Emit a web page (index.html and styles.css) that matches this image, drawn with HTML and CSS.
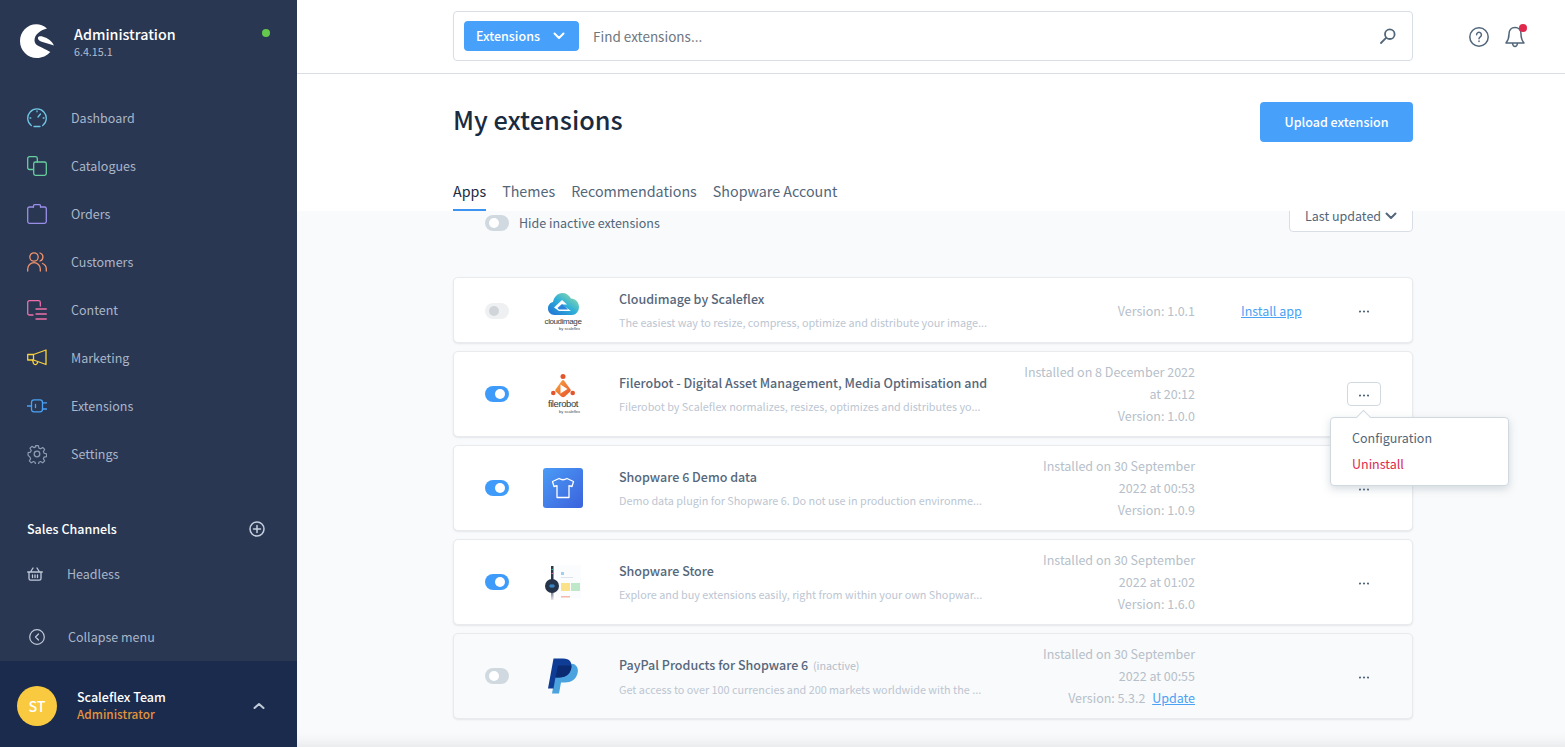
FILE: index.html
```html
<!DOCTYPE html>
<html lang="en">
<head>
  <meta charset="UTF-8">
  <title>My extensions</title>
  <link rel="stylesheet" href="styles.css">
</head>
<body>
  <aside class="sidebar">
    <div class="brand">
      <svg class="logo" viewBox="20 24 34 34"><path d="M47 28.500C43.500 25.500 40 24.300 36.500 24.300 27 24.300 20 32 20 41c0 9.500 7.500 17 17 17 5 0 10-2.300 13.300-6C46 49.500 42 47.500 38.500 46 36 45 34.500 42.500 34.500 40.500 34.500 34 41 30 47 28.500z" fill="#fff"/><path d="M38 37.500c.5-1.200 2.500-1.500 5-.8C48 38 52 41 54 45.500 50 44 45 43 41 41.500 39 40.700 37.500 39 38 37.500z" fill="#fff"/></svg>
      <div class="brand-text">
        <div class="brand-name">Administration</div>
        <div class="brand-version">6.4.15.1</div>
      </div>
      <span class="status-dot"></span>
    </div>

    <nav class="nav">
      <a class="nav-item">
        <svg class="nav-icon" viewBox="0 0 20 20" stroke="#6fc6e4"><path d="M4.300 17.600A9.300 9.300 0 1 1 15.700 17.600"/><path d="M7 18.500h6M10 3v.8M3 10h.8M16.200 10h.8M11 9l2.500-3"/></svg>
        <span>Dashboard</span>
      </a>
      <a class="nav-item">
        <svg class="nav-icon" viewBox="0 0 20 20" stroke="#67cf9e"><path d="M6 13.500H2.500a1.800 1.800 0 0 1-1.800-1.800V2.500A1.800 1.800 0 0 1 2.500.7h6a1.800 1.800 0 0 1 1.800 1.800V6"/><rect x="6.700" y="6" width="12.600" height="13.300" rx="1.800"/></svg>
        <span>Catalogues</span>
      </a>
      <a class="nav-item">
        <svg class="nav-icon" viewBox="0 0 20 20" stroke="#9a8fe8"><path d="M6.500 3H2.500a1.800 1.800 0 0 0-1.800 1.800v12.700a1.800 1.800 0 0 0 1.800 1.800h15a1.800 1.800 0 0 0 1.800-1.800V4.800A1.800 1.800 0 0 0 17.500 3h-4"/><path d="M6.500 3V1.700q0-1 1-1h5q1 0 1 1V3"/></svg>
        <span>Orders</span>
      </a>
      <a class="nav-item">
        <svg class="nav-icon" viewBox="0 0 20 20" stroke="#f0936a"><circle cx="7" cy="5" r="4.200"/><path d="M.7 19v-2a6.200 6.200 0 0 1 12.600 0v2M13 1a4.200 4.200 0 0 1 0 8M15.500 11.500a6 6 0 0 1 3.800 5.500v2"/></svg>
        <span>Customers</span>
      </a>
      <a class="nav-item">
        <svg class="nav-icon" viewBox="0 0 20 20" stroke="#ee6fa8"><path d="M6 15H2.500a1.800 1.800 0 0 1-1.800-1.800V2.500A1.800 1.800 0 0 1 2.500.7h9a1.800 1.800 0 0 1 1.800 1.800V6"/><path d="M9 9h10.300M9 14h10.300M9 19h10.300"/></svg>
        <span>Content</span>
      </a>
      <a class="nav-item">
        <svg class="nav-icon" viewBox="0 0 20 20" stroke="#f9d13e"><path d="M.7 6.500h5.800v5.500H.7zM6.500 6.500L19 2v14.500L6.500 12z"/><path d="M5.500 12l1 3.500q1 1.500 2.500 1 1.500-.5 1.500-2.200"/></svg>
        <span>Marketing</span>
      </a>
      <a class="nav-item">
        <svg class="nav-icon" viewBox="0 0 20 20" stroke="#4aa3f5"><rect x="4.500" y="3.800" width="11" height="12" rx="2.500"/><path d="M0 10h4.500M15.500 6.800H19.500M15.500 13h4M8.500 8.500v3"/></svg>
        <span>Extensions</span>
      </a>
      <a class="nav-item">
        <svg class="nav-icon" viewBox="0 0 20 20" stroke="#8e9bb0"><circle cx="10" cy="10" r="2.800"/><path d="M8.500.8h3l.6 2.700 1.800.8 2.400-1.400 2.100 2.100-1.400 2.400.8 1.800 2.700.6v3l-2.700.6-.8 1.800 1.400 2.400-2.100 2.100-2.400-1.400-1.800.8-.6 2.700h-3l-.6-2.700-1.800-.8-2.400 1.400-2.100-2.100 1.400-2.400-.8-1.800L.2 11.500v-3l2.700-.6.8-1.800L2.300 3.700l2.100-2.100 2.400 1.400 1.800-.8z" transform="translate(.9 .9) scale(.91)"/></svg>
        <span>Settings</span>
      </a>
    </nav>

    <div class="channels-head">
      <span>Sales Channels</span>
      <svg class="plus" viewBox="0 0 16 16"><circle cx="8" cy="8" r="7"/><path d="M8 4.500v7M4.500 8h7"/></svg>
    </div>
    <a class="channel">
      <svg class="channel-icon" viewBox="0 0 16 14"><path d="M.7 5h14.600M2 5v6.500q0 1.700 1.700 1.700h8.600q1.700 0 1.700-1.700V5M3.500 5L6 1M12.500 5L10 1M5.500 8v2.500M8 8v2.500M10.500 8v2.500"/></svg>
      <span>Headless</span>
    </a>
    <a class="collapse">
      <svg class="collapse-icon" viewBox="0 0 16 16"><circle cx="8" cy="8" r="7.300"/><path d="M9.500 5L6.500 8l3 3"/></svg>
      <span>Collapse menu</span>
    </a>

    <div class="user">
      <div class="avatar">ST</div>
      <div class="user-text">
        <div class="user-name">Scaleflex Team</div>
        <div class="user-role">Administrator</div>
      </div>
      <svg class="user-chevron" viewBox="0 0 12 8"><path d="M1.500 6L6 2l4.500 4"/></svg>
    </div>
  </aside>

  <main class="main">
    <header class="topbar">
      <div class="search">
        <button class="search-type">Extensions
          <svg class="chev" viewBox="0 0 12 8"><path d="M1.500 1.500L6 6l4.500-4.500"/></svg>
        </button>
        <span class="search-input">Find extensions...</span>
        <svg class="search-icon" viewBox="0 0 16 16"><circle cx="9.800" cy="6.200" r="4.800"/><path d="M6.300 9.700L1 15"/></svg>
      </div>
      <div class="top-icons">
        <svg class="help" viewBox="0 0 20 20"><circle cx="10" cy="10" r="9.200"/><path d="M7.600 7.800a2.400 2.400 0 1 1 3.700 2c-.9.600-1.300 1-1.300 1.900"/><path d="M10 14v.4"/></svg>
        <span class="bell-wrap">
          <svg class="bell" viewBox="0 0 20 22"><path d="M10 1.500c-3.700 0-6 2.800-6 6.500 0 5-1.300 7-3 9h18c-1.700-2-3-4-3-9 0-3.700-2.300-6.500-6-6.500zM7.500 17.500q.5 3 2.500 3t2.500-3"/></svg>
          <span class="bell-dot"></span>
        </span>
      </div>
    </header>

    <section class="page-head">
      <div class="title-row">
        <h1>My extensions</h1>
        <button class="upload">Upload extension</button>
      </div>
      <div class="tabs">
        <a class="tab active">Apps</a>
        <a class="tab">Themes</a>
        <a class="tab">Recommendations</a>
        <a class="tab">Shopware Account</a>
      </div>
    </section>

    <section class="content">
      <div class="filters">
        <div class="filter-left">
          <span class="toggle off"></span>
          <span>Hide inactive extensions</span>
        </div>
        <div class="sort">Last updated
          <svg class="chev dark" viewBox="0 0 12 8"><path d="M1.500 1.500L6 6l4.500-4.500"/></svg>
        </div>
      </div>

      <div class="list">
        <article class="card short">
          <span class="toggle disabled"></span>
          <div class="app-img">
            <svg class="cloud" viewBox="0 0 31 22">
              <defs><linearGradient id="cl" x1="0" y1="1" x2="1" y2="0"><stop offset="0" stop-color="#1f6fd6"/><stop offset=".5" stop-color="#2fb0d8"/><stop offset="1" stop-color="#a5e3a0"/></linearGradient></defs>
              <path d="M6.500 22C2.500 22 0 19 0 15.500 0 12 2.300 9.500 5 9 6 4 9.500 0 14.500 0c3.700 0 6.500 2 8.500 5.500 4.500 0 8 4 8 8.500s-3.500 8-7 8z" fill="url(#cl)"/>
              <path d="M6 14.500l8-7.500 5 4.500h-5l9 6.500H11z" fill="#fff"/>
              <path d="M9.500 15l4.500-4 3 2.500 3 3H11z" fill="#2a84dc"/>
            </svg>
            <span class="logo-word">cloudimage</span>
            <span class="logo-by">by scaleflex</span>
          </div>
          <div class="info">
            <div class="app-name">Cloudimage by Scaleflex</div>
            <div class="app-desc">The easiest way to resize, compress, optimize and distribute your image...</div>
          </div>
          <div class="version">Version: 1.0.1</div>
          <div class="actions">
            <a class="link install">Install app</a>
            <span class="dots"><svg viewBox="0 0 10 3"><circle cx="1" cy="1.500" r="1.100"/><circle cx="5" cy="1.500" r="1.100"/><circle cx="9" cy="1.500" r="1.100"/></svg></span>
          </div>
        </article>

        <article class="card">
          <span class="toggle on"></span>
          <div class="app-img">
            <svg class="robot" viewBox="0 0 24 24">
              <defs><linearGradient id="fr" x1="0" y1="0" x2="1" y2="1"><stop offset="0" stop-color="#f9a842"/><stop offset="1" stop-color="#e9502a"/></linearGradient></defs>
              <circle cx="12" cy="2.500" r="2.500" fill="#e2552d"/><circle cx="2.300" cy="19" r="2.300" fill="#e2552d"/><circle cx="21.700" cy="19" r="2.300" fill="#e2552d"/>
              <path d="M11 6.500q1-.8 2 0l6.500 9q.7 1-.2 2l-5.500 5q-1.800 1.300-3.600 0l-5.500-5q-.9-1-.2-2z" fill="url(#fr)"/>
              <path d="M9.500 10.500l7 4.500-7 4.500z" fill="#fff"/>
            </svg>
            <span class="logo-word fr">filerobot</span>
            <span class="logo-by">by scaleflex</span>
          </div>
          <div class="info">
            <div class="app-name">Filerobot - Digital Asset Management, Media Optimisation and</div>
            <div class="app-desc">Filerobot by Scaleflex normalizes, resizes, optimizes and distributes yo...</div>
          </div>
          <div class="version">Installed on 8 December 2022 at 20:12<br>Version: 1.0.0</div>
          <div class="actions">
            <span class="dots open"><svg viewBox="0 0 10 3"><circle cx="1" cy="1.500" r="1.100"/><circle cx="5" cy="1.500" r="1.100"/><circle cx="9" cy="1.500" r="1.100"/></svg></span>
          </div>
          <div class="menu">
            <a class="menu-item">Configuration</a>
            <a class="menu-item danger">Uninstall</a>
          </div>
        </article>

        <article class="card">
          <span class="toggle on"></span>
          <div class="app-img demo">
            <svg class="shirt" viewBox="0 0 24 24"><path d="M8 2.500L1.500 5.500l1.500 5 3-.8v11.800h12V9.700l3 .8 1.500-5L16 2.500q-4 2.500-8 0z"/></svg>
          </div>
          <div class="info">
            <div class="app-name">Shopware 6 Demo data</div>
            <div class="app-desc">Demo data plugin for Shopware 6. Do not use in production environme...</div>
          </div>
          <div class="version">Installed on 30 September 2022 at 00:53<br>Version: 1.0.9</div>
          <div class="actions"><span class="dots"><svg viewBox="0 0 10 3"><circle cx="1" cy="1.500" r="1.100"/><circle cx="5" cy="1.500" r="1.100"/><circle cx="9" cy="1.500" r="1.100"/></svg></span></div>
        </article>

        <article class="card">
          <span class="toggle on"></span>
          <div class="app-img store">
            <svg viewBox="0 0 40 40" class="store-art">
              <defs><linearGradient id="st" x1="0" y1="0" x2="0" y2="1"><stop offset="0" stop-color="#5f6e80"/><stop offset="1" stop-color="#e6e9ed"/></linearGradient></defs>
              <rect x="13" y="3" width="25" height="33" fill="#fbfcfd"/>
              <rect x="8" y="4" width="2.500" height="14" fill="#2b3a4f"/><rect x="8" y="29" width="2.500" height="9" fill="url(#st)"/>
              <rect x="8.500" y="7" width="1.500" height="1" fill="#3fb5a0"/><rect x="8.500" y="11" width="1.500" height="1" fill="#e0708a"/>
              <rect x="18" y="21" width="9" height="8" fill="#fbe28a"/><rect x="28" y="21" width="9" height="8" fill="#bfe8c8"/>
              <rect x="18" y="34" width="9" height="1.500" fill="#f6b8ad"/><rect x="18" y="10" width="3" height="3" fill="#9fd0ef"/><rect x="18" y="15" width="12" height="1" fill="#dfe4ea"/>
              <circle cx="9" cy="24" r="7" fill="#26344a"/><path d="M6.500 24h5M8 22.500v3M10 22.500v3" stroke="#3f9de8" stroke-width="1"/>
            </svg>
          </div>
          <div class="info">
            <div class="app-name">Shopware Store</div>
            <div class="app-desc">Explore and buy extensions easily, right from within your own Shopwar...</div>
          </div>
          <div class="version">Installed on 30 September 2022 at 01:02<br>Version: 1.6.0</div>
          <div class="actions"><span class="dots"><svg viewBox="0 0 10 3"><circle cx="1" cy="1.500" r="1.100"/><circle cx="5" cy="1.500" r="1.100"/><circle cx="9" cy="1.500" r="1.100"/></svg></span></div>
        </article>

        <article class="card inactive">
          <span class="toggle off"></span>
          <div class="app-img clear">
            <svg class="paypal" viewBox="0 0 30 35">
              <path d="M5.500 4H18c6 0 9 4 7.500 10C24 20 19 23 13 23H9L7 34H0z" fill="#4aa2de" transform="translate(4 1)"/>
              <path d="M5.500 0H15c7 0 9.500 4 8 10-1.500 6-6 9-12 9H7.500L5.500 30H0z" fill="#0f3d96"/>
              <path d="M10 7h13.500c0 8-5 12-12.500 12H7.500z" fill="#0a2a72"/>
            </svg>
          </div>
          <div class="info">
            <div class="app-name">PayPal Products for Shopware 6 <span class="tag">(inactive)</span></div>
            <div class="app-desc">Get access to over 100 currencies and 200 markets worldwide with the ...</div>
          </div>
          <div class="version">Installed on 30 September 2022 at 00:55<br>Version: 5.3.2 <a class="link update">Update</a></div>
          <div class="actions"><span class="dots"><svg viewBox="0 0 10 3"><circle cx="1" cy="1.500" r="1.100"/><circle cx="5" cy="1.500" r="1.100"/><circle cx="9" cy="1.500" r="1.100"/></svg></span></div>
        </article>
      </div>
    </section>
  </main>
</body>
</html>
```

FILE: styles.css
```css
* { box-sizing: border-box; }
html, body { height: 100%; }
body { margin: 0; display: flex; overflow: hidden; font-family: "Noto Sans CJK SC", "Noto Sans", sans-serif; font-size: 12.5px; line-height: 20px; color: #52667a; background: #fff; }
svg { display: block; fill: none; stroke-width: 1.5; stroke-linecap: round; stroke-linejoin: round; }
a { cursor: pointer; }
button { font: inherit; border: 0; color: #fff; background: #47a1fb; border-radius: 4px; }

/* sidebar */
.sidebar { width: 297px; flex: none; height: 747px; display: flex; flex-direction: column; background: #293753; color: #aab6c8; }
.brand { display: flex; height: 94px; padding: 24px 27px 0 20px; }
.logo { width: 34px; height: 34px; }
.brand-text { margin-left: 20px; flex: 1; }
.brand-name { font-size: 14.3px; font-weight: 500; line-height: 20px; color: #fff; }
.brand-version { font-size: 10.7px; line-height: 16px; color: #b3bfd0; }
.status-dot { width: 8px; height: 8px; margin-top: 5px; border-radius: 50%; background: #65c84c; }

.nav-item { display: flex; align-items: center; height: 48px; padding-left: 27px; }
.nav-icon { width: 20px; height: 20px; margin-right: 24px; stroke-width: 1.300; }

.channels-head { display: flex; justify-content: space-between; align-items: center; height: 24px; margin-top: 39px; padding: 0 32px 0 27px; color: #fff; font-weight: 500; }
.plus { width: 16px; height: 16px; stroke: #c6cfdd; }
.channel { display: flex; align-items: center; height: 24px; margin-top: 21px; padding-left: 27px; }
.channel-icon { width: 16px; height: 14px; margin-right: 24px; stroke: #c0cad8; stroke-width: 1.300; }
.collapse { display: flex; align-items: center; height: 24px; margin-top: 39px; padding-left: 29px; }
.collapse-icon { width: 16px; height: 16px; margin-right: 23px; stroke: #c0cad8; stroke-width: 1.200; }

.user { display: flex; align-items: center; height: 86px; margin-top: 12px; padding: 4px 32px 0 17px; background: #1b2b4d; }
.avatar { width: 40px; height: 40px; border-radius: 50%; background: #f9c940; color: #fff; font-size: 14.3px; font-weight: 500; line-height: 40px; text-align: center; }
.user-text { flex: 1; margin: -2px 0 0 20px; }
.user-name { color: #fff; font-weight: 500; line-height: 18px; }
.user-role { color: #e5933b; font-size: 11.8px; font-weight: 500; line-height: 16px; }
.user-chevron { width: 12px; height: 8px; stroke: #c0cad8; stroke-width: 2; }

/* main */
.main { flex: 1; height: 747px; display: flex; flex-direction: column; min-width: 0; }
.topbar { display: flex; align-items: center; height: 74px; flex: none; padding: 0 38px 0 156px; border-bottom: 1px solid #d8dde6; }
.search { display: flex; align-items: center; width: 960px; height: 50px; margin-top: -1px; padding: 0 16px 0 10px; border: 1px solid #d8dde6; border-radius: 4px; }
.search-type { display: flex; align-items: center; justify-content: space-between; width: 115px; height: 30px; padding: 0 14px 0 12px; font-weight: 500; }
.chev { width: 12px; height: 8px; stroke: #fff; stroke-width: 2; }
.chev.dark { stroke: #52667a; }
.search-input { flex: 1; margin-left: 14px; font-size: 13.5px; color: #6f7780; }
.search-icon { width: 16px; height: 16px; stroke: #52667a; stroke-width: 1.800; }
.top-icons { display: flex; align-items: center; gap: 16px; margin-left: 56px; }
.help { width: 20px; height: 20px; stroke: #52667a; }
.bell-wrap { position: relative; display: block; }
.bell { width: 20px; height: 22px; stroke: #52667a; }
.bell-dot { position: absolute; top: -2px; right: -2px; width: 8px; height: 8px; border-radius: 50%; background: #de294c; }

.page-head { flex: none; height: 137px; padding: 28px 152px 0 156px; }
.title-row { display: flex; justify-content: space-between; align-items: center; height: 40px; }
h1 { margin: 0 0 7px; font-size: 25.3px; font-weight: 500; line-height: 36px; color: #1a2b3f; }
.upload { width: 153px; height: 40px; font-weight: 500; }
.tabs { display: flex; gap: 16px; margin-top: 37px; }
.tab { height: 32px; font-size: 14.3px; line-height: 24px; }
.tab.active { color: #1a2b3f; border-bottom: 2px solid #3d93f0; }

.content { flex: 1; padding: 0 152px 0 156px; background: #f9fafb; overflow: hidden; box-shadow: inset 0 -14px 12px -10px #e6e8eb; }
.filters { display: flex; justify-content: space-between; align-items: flex-start; height: 21px; padding-left: 32px; overflow: hidden; }
.filter-left { display: flex; align-items: center; gap: 10px; height: 24px; flex: none; }
.sort { display: flex; align-items: center; gap: 4px; flex: none; width: 124px; height: 40px; margin-top: -19px; padding: 8px 0 0 15px; background: #fff; border: 1px solid #d8dde6; border-radius: 4px; }

.toggle { position: relative; flex: none; display: block; width: 24px; height: 16px; border-radius: 8px; }
.toggle::after { content: ""; position: absolute; top: 3px; width: 10px; height: 10px; border-radius: 50%; background: #fff; }
.toggle.on { background: #3f9bfa; }
.toggle.on::after { right: 4px; }
.toggle.off { background: #d1d9e0; }
.toggle.off::after { left: 4px; }
.toggle.disabled { background: #eef0f2; }
.toggle.disabled::after { left: 4px; background: #d1d5da; }

.list { display: flex; flex-direction: column; gap: 8px; margin-top: 45px; }
.card { position: relative; display: flex; align-items: center; height: 86px; padding-left: 31px; background: #fff; border: 1px solid #e8ebee; border-radius: 5px; box-shadow: 0 1px 2px #e3e6ea; }
.card.short { height: 66px; padding-top: 2px; }
.card.short .info { margin-top: -2px; }
.card.inactive { background: #f9fafb; }

.app-img { display: flex; flex-direction: column; align-items: center; flex: none; width: 40px; height: 40px; margin-left: 34px; background: #fff; }
.app-img.clear { background: transparent; }
.app-img.demo { justify-content: center; border-radius: 3px; background: linear-gradient(135deg, #4a9bf6, #3c62dc); }
.cloud { width: 31px; height: 22px; margin-top: 2px; }
.robot { width: 24px; height: 24px; }
.shirt { width: 24px; height: 24px; stroke: #fff; stroke-width: 1.300; }
.store-art, .paypal { width: 40px; height: 40px; }
.paypal { width: 30px; height: 36px; margin-top: 2px; }
.logo-word { font-family: "Liberation Sans", sans-serif; font-size: 8px; line-height: 9px; letter-spacing: -.4px; color: #2c3a42; white-space: nowrap; margin-top: 2px; }
.logo-word.fr { font-size: 9.500px; line-height: 11px; margin-top: 0; }
.logo-by { font-family: "Liberation Sans", sans-serif; font-size: 4px; line-height: 5px; color: #3c4852; white-space: nowrap; align-self: flex-end; margin-right: 3px; }

.info { width: 368px; flex: none; margin-left: 36px; padding-bottom: 1px; }
.app-name { font-weight: 500; line-height: 20px; margin-bottom: 5px; white-space: nowrap; color: #56677b; }
.app-desc { font-size: 10.82px; line-height: 16px; color: #bcc6d2; white-space: nowrap; }
.tag { margin-left: 2px; font-size: 10.7px; font-weight: 400; color: #b3bdc9; }

.version { width: 180px; margin-left: 28px; flex: none; text-align: right; line-height: 22px; color: #b6bfca; }
.actions { flex: 1; display: flex; align-items: center; padding-right: 31px; }
.link { color: #4aa2f5; text-decoration: underline; }
.update { margin-left: 4px; }
.install { margin-left: 46px; }
.dots { display: flex; align-items: center; justify-content: center; width: 34px; height: 24px; margin-left: auto; border: 1px solid transparent; border-radius: 4px; }
.dots svg { width: 10px; height: 3px; margin-top: 2px; fill: #52667a; stroke: none; }
.short .dots svg { margin-top: 0; }
.dots.open { border-color: #d1d9e0; }

/* context menu */
.menu { position: absolute; z-index: 2; top: 65px; left: 876px; width: 179px; height: 69px; padding: 8px 21px; background: #fff; border: 1px solid #d1d9e0; border-radius: 4px; box-shadow: 0 3px 8px rgba(120, 138, 155, .3); }
.menu::before { content: ""; position: absolute; top: -6px; left: 27px; width: 10px; height: 10px; transform: rotate(45deg); background: #fff; border-top: 1px solid #d1d9e0; border-left: 1px solid #d1d9e0; }
.menu-item { display: block; height: 26px; line-height: 24px; color: #52667a; }
.menu-item.danger { color: #de294c; }
```
